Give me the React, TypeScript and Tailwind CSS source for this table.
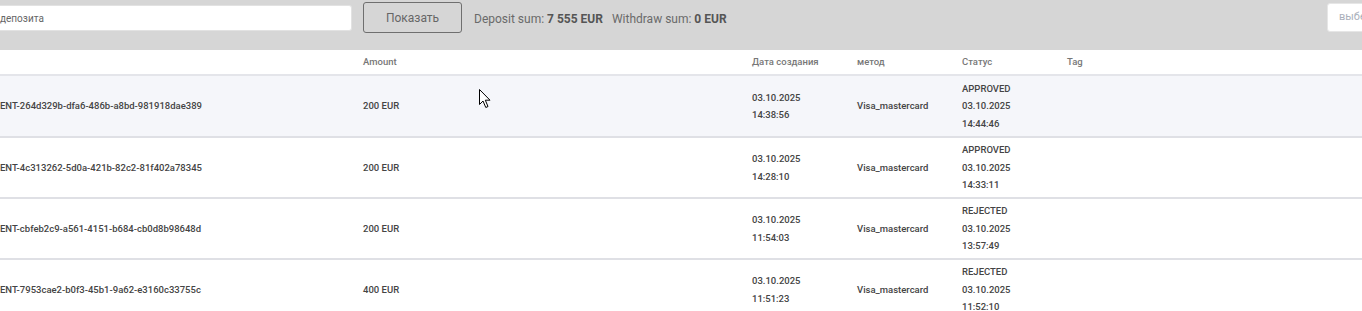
import React from "react";

type Row = {
  id: string;
  amount: string;
  date: string;
  time: string;
  method: string;
  status: string;
  statusDate: string;
  statusTime: string;
};

const rows: Row[] = [
  {
    id: "ENT-264d329b-dfa6-486b-a8bd-981918dae389",
    amount: "200 EUR",
    date: "03.10.2025",
    time: "14:38:56",
    method: "Visa_mastercard",
    status: "APPROVED",
    statusDate: "03.10.2025",
    statusTime: "14:44:46",
  },
  {
    id: "ENT-4c313262-5d0a-421b-82c2-81f402a78345",
    amount: "200 EUR",
    date: "03.10.2025",
    time: "14:28:10",
    method: "Visa_mastercard",
    status: "APPROVED",
    statusDate: "03.10.2025",
    statusTime: "14:33:11",
  },
  {
    id: "ENT-cbfeb2c9-a561-4151-b684-cb0d8b98648d",
    amount: "200 EUR",
    date: "03.10.2025",
    time: "11:54:03",
    method: "Visa_mastercard",
    status: "REJECTED",
    statusDate: "03.10.2025",
    statusTime: "13:57:49",
  },
  {
    id: "ENT-7953cae2-b0f3-45b1-9a62-e3160c33755c",
    amount: "400 EUR",
    date: "03.10.2025",
    time: "11:51:23",
    method: "Visa_mastercard",
    status: "REJECTED",
    statusDate: "03.10.2025",
    statusTime: "11:52:10",
  },
];

function Cursor() {
  return (
    <svg
      className="absolute left-[479px] top-[89px] pointer-events-none"
      width="13"
      height="20"
      viewBox="0 0 13 20"
    >
      <path
        d="M0.5 0.5 L0.5 15.5 L4 12 L6.8 18.5 L9 17.5 L6.3 11.2 L11 11.2 Z"
        fill="#fff"
        stroke="#000"
        strokeWidth="1"
        strokeLinejoin="round"
      />
    </svg>
  );
}

export default function App() {
  return (
    <div
      className="relative w-full overflow-hidden bg-white text-[#444]"
      style={{ fontFamily: "Roboto, 'Liberation Sans', sans-serif" }}
    >
      {/* Filter bar */}
      <div className="flex h-[50px] items-start bg-[#d6d6d6]">
        <div className="mt-[5px] flex h-[26px] w-[352px] items-center rounded-r-[3px] border border-l-0 border-[#e2e2e2] bg-white text-[10px] text-[#666]">
          депозита
        </div>
        <button className="ml-[11px] mt-[2px] h-[31px] w-[99px] rounded-[3px] border border-[#6f6f6f] text-[12px] text-[#666]">
          Показать
        </button>
        <div className="ml-[12px] mt-[10px] text-[12px] text-[#6a6a6a]">
          Deposit sum: <span className="font-bold text-[#555]">7 555 EUR</span>
          <span className="ml-[9px]">Withdraw sum: </span>
          <span className="font-bold text-[#555]">0 EUR</span>
        </div>
        <div className="ml-auto -mr-[60px] mt-[3px] flex h-[29px] w-[95px] items-center rounded-[3px] border border-[#e6e6e6] bg-white pl-[11px] text-[11px] text-[#aab0bb]">
          выберите
        </div>
      </div>

      {/* Table */}
      <table className="w-full border-collapse text-[9.5px] font-medium">
        <thead>
          <tr className="h-[25px] border-b-2 border-[#e4e5ea] text-left text-[#777]">
            <th className="w-[363px] p-0 font-medium"></th>
            <th className="w-[389px] p-0 font-medium">Amount</th>
            <th className="w-[105px] p-0 font-medium">Дата создания</th>
            <th className="w-[105px] p-0 font-medium">метод</th>
            <th className="w-[105px] p-0 font-medium">Статус</th>
            <th className="p-0 font-medium">Tag</th>
          </tr>
        </thead>
        <tbody>
          {rows.map((r, i) => (
            <tr
              key={r.id}
              className={`border-b-2 border-[#dfe0e5] align-middle leading-[17.5px] ${
                i === 0 ? "h-[62px] bg-[#f5f6fa]" : "h-[61px] bg-white"
              }`}
            >
              <td className="p-0 whitespace-nowrap">{r.id}</td>
              <td className="p-0">{r.amount}</td>
              <td className="p-0">
                <div>{r.date}</div>
                <div>{r.time}</div>
              </td>
              <td className="p-0">{r.method}</td>
              <td className="p-0 py-[2px]">
                <div>{r.status}</div>
                <div>{r.statusDate}</div>
                <div>{r.statusTime}</div>
              </td>
              <td className="p-0"></td>
            </tr>
          ))}
        </tbody>
      </table>

      <Cursor />
    </div>
  );
}
